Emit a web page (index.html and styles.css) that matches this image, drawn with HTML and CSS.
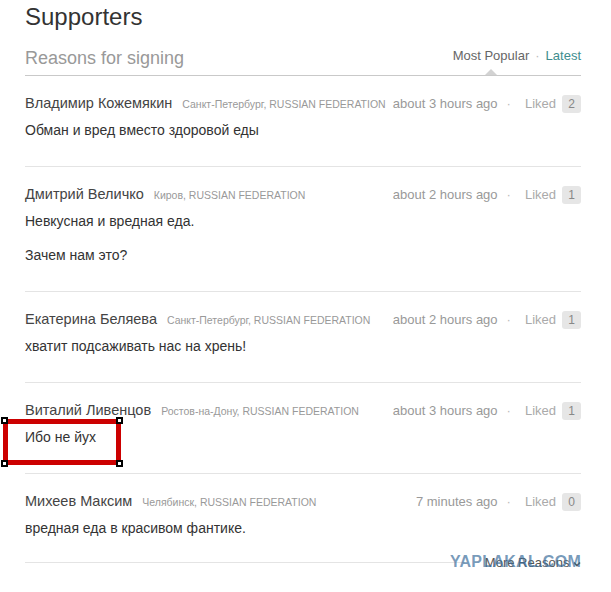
FILE: index.html
```html
<html>

<head>
	<meta charset="utf-8">
	<title>Supporters</title>
	<link rel="stylesheet" href="styles.css">
</head>

<body>
	<div class="page">
		<h1 class="title">Supporters</h1>

		<div class="reasons-head">
			<h2>Reasons for signing</h2>
			<div class="sort">
				<span class="sort-item active">Most Popular</span>
				<span class="dot">·</span>
				<a class="sort-item link" href="#">Latest</a>
			</div>
		</div>

		<ul class="reasons">
			<li class="reason">
				<div class="meta">
					<span class="name">Владимир Кожемякин</span>
					<span class="place">Санкт-Петербург, RUSSIAN FEDERATION</span>
					<span class="time">about 3 hours ago</span>
					<span class="dot">·</span>
					<span class="liked">Liked</span>
					<span class="count">2</span>
				</div>
				<p>Обман и вред вместо здоровой еды</p>
			</li>
			<li class="reason">
				<div class="meta">
					<span class="name">Дмитрий Величко</span>
					<span class="place">Киров, RUSSIAN FEDERATION</span>
					<span class="time">about 2 hours ago</span>
					<span class="dot">·</span>
					<span class="liked">Liked</span>
					<span class="count">1</span>
				</div>
				<p>Невкусная и вредная еда.</p>
				<p>Зачем нам это?</p>
			</li>
			<li class="reason">
				<div class="meta">
					<span class="name">Екатерина Беляева</span>
					<span class="place">Санкт-Петербург, RUSSIAN FEDERATION</span>
					<span class="time">about 2 hours ago</span>
					<span class="dot">·</span>
					<span class="liked">Liked</span>
					<span class="count">1</span>
				</div>
				<p>хватит подсаживать нас на хрень!</p>
			</li>
			<li class="reason">
				<div class="meta">
					<span class="name">Виталий Ливенцов</span>
					<span class="place">Ростов-на-Дону, RUSSIAN FEDERATION</span>
					<span class="time">about 3 hours ago</span>
					<span class="dot">·</span>
					<span class="liked">Liked</span>
					<span class="count">1</span>
				</div>
				<p>Ибо не йух</p>
			</li>
			<li class="reason last">
				<div class="meta">
					<span class="name">Михеев Максим</span>
					<span class="place">Челябинск, RUSSIAN FEDERATION</span>
					<span class="time">7 minutes ago</span>
					<span class="dot">·</span>
					<span class="liked">Liked</span>
					<span class="count">0</span>
				</div>
				<p>вредная еда в красивом фантике.</p>
			</li>
		</ul>

		<div class="more">
			<a class="more-link" href="#">More Reasons
				<svg width="8" height="6" viewBox="0 0 8 6"><path d="M1 1.5 L4 4.5 L7 1.5" fill="none" stroke="#555" stroke-width="1.6"/></svg>
			</a>
		</div>
	</div>

	<!-- рамка выделения поверх скриншота -->
	<div class="highlight">
		<span class="handle tl"></span>
		<span class="handle tr"></span>
		<span class="handle bl"></span>
		<span class="handle br"></span>
	</div>

	<div class="watermark">YAPLAKAL.COM</div>
</body>

</html>
```

FILE: styles.css
```css
body {
	margin: 0;
	padding: 0;
	background-color: #fff;
	font-family: "Liberation Sans", Arial, sans-serif;
	color: #333;
}

.page {
	padding: 3px 30px 0 25px;
}

.title {
	margin: 0;
	font-size: 24px;
	font-weight: normal;
	line-height: 28px;
	color: #333;
}

.reasons-head {
	display: flex;
	justify-content: space-between;
	align-items: flex-end;
	margin-top: 15px;
	padding-bottom: 5px;
	border-bottom: 1px solid #c9c9c9;
}

.reasons-head h2 {
	margin: 0;
	font-size: 18px;
	font-weight: normal;
	line-height: 24px;
	color: #999;
}

.sort {
	display: flex;
	align-items: center;
	margin-bottom: 6px;
	font-size: 13px;
	line-height: 16px;
}

.sort-item {
	position: relative;
	color: #666;
}

.sort-item.link {
	color: #3e8d8e;
	text-decoration: none;
}

/* стрелочка под активной вкладкой */
.sort-item.active::after {
	content: "";
	position: absolute;
	left: 50%;
	bottom: -11px;
	margin-left: -6px;
	border-left: 6px solid transparent;
	border-right: 6px solid transparent;
	border-bottom: 6px solid #d2d2d2;
}

.sort .dot {
	margin: 0 6px;
	color: #bbb;
}

.reasons {
	list-style: none;
	margin: 0;
	padding: 0;
}

.reason {
	padding: 17px 0 26px;
	border-bottom: 1px solid #e4e4e4;
}

.reason.last {
	padding-bottom: 14px;
	border-bottom: none;
}

.meta {
	display: flex;
	align-items: baseline;
	line-height: 20px;
	white-space: nowrap;
}

.meta span {
	flex-shrink: 0;
}

.name {
	font-size: 14.5px;
	color: #444;
}

.place {
	margin-left: 10px;
	font-size: 10.5px;
	color: #999;
}

.meta .time {
	margin-left: auto;
	font-size: 13px;
	color: #999;
}

.meta .dot {
	margin: 0 14px 0 9px;
	font-size: 13px;
	color: #bbb;
}

.liked {
	font-size: 13px;
	color: #aaa;
}

.count {
	display: inline-block;
	margin-left: 6px;
	min-width: 19px;
	height: 18px;
	line-height: 18px;
	border-radius: 3px;
	background-color: #e6e6e6;
	font-size: 12px;
	color: #888;
	text-align: center;
}

.reason p {
	margin: 6px 0 0;
	font-size: 14px;
	line-height: 20px;
	color: #333;
}

.reason p + p {
	margin-top: 14px;
}

.more {
	display: flex;
	align-items: center;
	height: 20px;
}

.more::before {
	content: "";
	flex: 1;
	height: 1px;
	background-color: #e4e4e4;
}

.more-link {
	margin-left: 20px;
	font-size: 13px;
	color: #555;
	text-decoration: none;
}

.highlight {
	position: absolute;
	left: 3px;
	top: 419px;
	width: 118px;
	height: 46px;
	box-sizing: border-box;
	border: 5px solid #cc0000;
}

.handle {
	position: absolute;
	width: 7px;
	height: 7px;
	box-sizing: border-box;
	border: 2px solid #000;
	background-color: #fff;
}

.handle.tl { left: -7px; top: -7px; }
.handle.tr { right: -7px; top: -7px; }
.handle.bl { left: -7px; bottom: -7px; }
.handle.br { right: -7px; bottom: -7px; }

.watermark {
	position: absolute;
	left: 450px;
	top: 553px;
	font-size: 16px;
	font-weight: bold;
	letter-spacing: 0.3px;
	color: rgba(60, 110, 155, 0.7);
}
```
